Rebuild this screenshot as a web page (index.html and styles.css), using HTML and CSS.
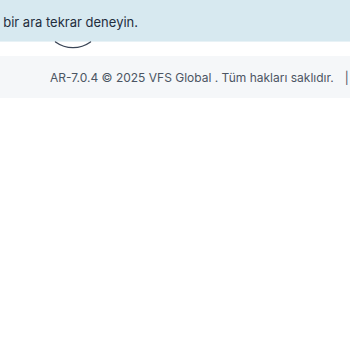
FILE: index.html
```html
<!DOCTYPE html>
<html lang="tr">
<head>
<meta charset="utf-8">
<link rel="stylesheet" href="styles.css">
</head>
<body>
<div class="alert"><span class="alert-text">sonra bir ara tekrar deneyin.</span></div>
<div class="loader">
  <svg class="arc" width="38" height="9" viewBox="0 0 38 9"><path d="M1.5 1 A30 30 0 0 0 36.5 1" fill="none" stroke="#3b4657" stroke-width="1.4" stroke-linecap="round"/></svg>
</div>
<footer class="footer"><span class="footer-text">AR-7.0.4 © 2025 VFS Global . Tüm hakları saklıdır.<span class="sep">|</span>Gizlilik</span></footer>
</body>
</html>
```
FILE: styles.css
```css
html, body { margin: 0; padding: 0; background: #fff; overflow: hidden; }
body { font-family: Inter, "Noto Sans", sans-serif; }
.alert {
  height: 42px;
  background: #d7e9f0;
  border-bottom: 1px solid #e8f2f6;
  padding-top: 14px;
  white-space: nowrap;
  overflow: hidden;
  box-sizing: border-box;
}
.alert-text {
  display: block;
  font-size: 13px;
  line-height: 16px;
  color: #1f2d3d;
  margin-left: -35px;
}
.loader {
  height: 15px;
  padding-left: 54px;
}
.arc { display: block; margin-top: -1px; }
.footer {
  height: 42px;
  background: #f5f7f9;
  padding-left: 50px;
  padding-top: 14px;
  box-sizing: border-box;
  white-space: nowrap;
  overflow: hidden;
}
.footer-text { display: block; font-size: 12px; line-height: 16px; color: #4b5563; }
.sep { margin: 0 10px 0 11px; }
```
